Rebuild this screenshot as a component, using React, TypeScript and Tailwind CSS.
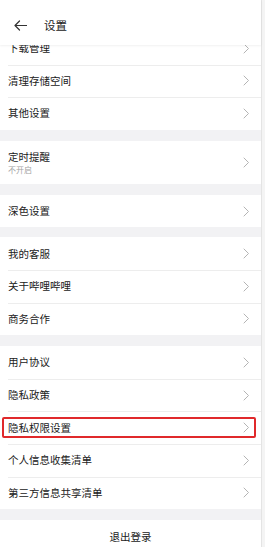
import { ReactNode } from "react";

type Item = { title: string; sub?: string; highlight?: boolean };

const groups: Item[][] = [
  [{ title: "下载管理" }, { title: "清理存储空间" }, { title: "其他设置" }],
  [{ title: "定时提醒", sub: "不开启" }],
  [{ title: "深色设置" }],
  [{ title: "我的客服" }, { title: "关于哔哩哔哩" }, { title: "商务合作" }],
  [
    { title: "用户协议" },
    { title: "隐私政策" },
    { title: "隐私权限设置", highlight: true },
    { title: "个人信息收集清单" },
    { title: "第三方信息共享清单" },
  ],
];

const Chevron = () => (
  <svg width="7" height="11" viewBox="0 0 7 11" fill="none" className="shrink-0">
    <path d="M1 1l4.5 4.5L1 10" stroke="#b4b4b4" strokeWidth="1" strokeLinecap="round" strokeLinejoin="round" />
  </svg>
);

const Row = ({ item, first, extra }: { item: Item; first: boolean; extra?: string }) => (
  <div className={`relative pl-2 pr-[11px] bg-white ${extra ?? ""}`}>
    {!first && <div className="absolute top-0 left-2 right-0 h-px bg-[#ededed]" />}
    <div className={`flex items-center justify-between ${item.sub ? "h-[43px]" : "h-[32.6px]"}`}>
      <div className="flex flex-col">
        <span className="text-[10.5px] leading-[14px] text-[#212121]">{item.title}</span>
        {item.sub && <span className="text-[8px] leading-[11px] text-[#a3a3a3]">{item.sub}</span>}
      </div>
      <Chevron />
    </div>
    {item.highlight && (
      <div className="absolute left-[2px] right-[5px] top-[6px] bottom-[6px] border-2 border-[#e0292b] rounded-[2px]" />
    )}
  </div>
);

const Gap = ({ h }: { h: string }) => <div className={`${h} bg-[#f2f2f4]`} />;

export default function App(): ReactNode {
  return (
    <div
      className="w-[265px] h-[547px] overflow-hidden bg-[#f4f4f4] flex"
      style={{ fontFamily: '"Noto Sans CJK SC", "Noto Sans", sans-serif' }}
    >
      <div className="w-[262px] h-full bg-[#f2f2f4] border-r border-[#e4e4e4] flex flex-col">
        <div className="relative z-10 h-[45px] shrink-0 bg-white flex items-end pb-[13px] pl-[14px] shadow-[0_1px_2px_rgba(0,0,0,0.06)]">
          <svg width="13" height="11" viewBox="0 0 13 11" fill="none" className="mb-px">
            <path d="M12.5 5.5H1M5.5 1L1 5.5 5.5 10" stroke="#333" strokeWidth="1.2" strokeLinecap="round" strokeLinejoin="round" />
          </svg>
          <span className="ml-[17px] text-[11.5px] leading-[13px] text-[#212121]">设置</span>
        </div>
        <div className="flex flex-col">
          {groups.map((g, gi) => (
            <div key={gi} className="flex flex-col">
              {gi > 0 && <Gap h={gi === 3 ? "h-[10px]" : "h-[11px]"} />}
              {g.map((item, i) => (
                <Row key={item.title} item={item} first={i === 0} extra={gi === 0 && i === 0 ? "-mt-[13px]" : ""} />
              ))}
            </div>
          ))}
          <Gap h="h-[11px]" />
          <div className="bg-white h-[34px] flex items-center justify-center">
            <span className="text-[10.5px] text-[#212121]">退出登录</span>
          </div>
        </div>
      </div>
    </div>
  );
}
